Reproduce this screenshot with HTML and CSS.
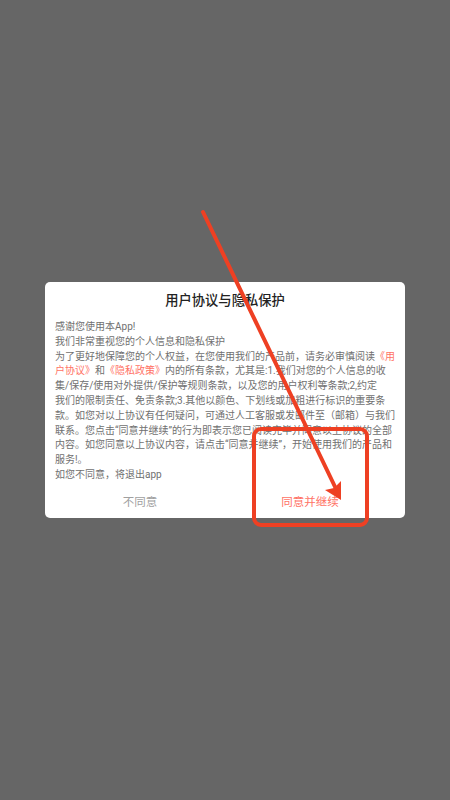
FILE: index.html
```html
<!DOCTYPE html>
<html lang="zh-CN">
<head>
    <meta charset="UTF-8">
    <title>用户协议与隐私保护</title>
    <link rel="stylesheet" href="styles.css">
</head>
<body>
<div class="mask">
    <div class="dialog">
        <h2 class="dialog-title">用户协议与隐私保护</h2>
        <div class="dialog-text">
            <p>感谢您使用本App!</p>
            <p>我们非常重视您的个人信息和隐私保护</p>
            <p>为了更好地保障您的个人权益，在您使用我们的产品前，请务必审慎阅读<span class="link">《用<br>户协议》</span>和<span class="link">《隐私政策》</span>内的所有条款，尤其是:1.我们对您的个人信息的收<br>集/保存/使用对外提供/保护等规则条款，以及您的用户权利等条款;2,约定<br>我们的限制责任、免责条款;3.其他以颜色、下划线或加粗进行标识的重要条<br>款。如您对以上协议有任何疑问，可通过人工客服或发邮件至（邮箱）与我们<br>联系。您点击“同意并继续”的行为即表示您已阅读完毕并同意以上协议的全部<br>内容。如您同意以上协议内容，请点击“同意并继续”，开始使用我们的产品和<br>服务!。</p>
            <p>如您不同意，将退出app</p>
        </div>
        <div class="dialog-btns">
            <div class="btn btn-no">不同意</div>
            <div class="btn btn-yes">同意并继续</div>
        </div>
    </div>
</div>
<!-- red annotation drawn over the screenshot -->
<svg class="mark" width="450" height="800" viewBox="0 0 450 800">
    <rect x="254" y="429" width="113" height="96" rx="7" fill="none" stroke="#ee4023" stroke-width="4"/>
    <path d="M203 212L338 493" fill="none" stroke="#ee4023" stroke-width="4" stroke-linecap="round"/>
    <path d="M341 500L325 490L334 488L341 481Z" fill="#ee4023"/>
</svg>
</body>
</html>
```

FILE: styles.css
```css
html, body {
    margin: 0;
    padding: 0;
}

body {
    position: relative;
    width: 450px;
    height: 800px;
    overflow: hidden;
    font-family: Roboto, "Noto Sans CJK SC", sans-serif;
}

.mask {
    height: 800px;
    background: #666;
    display: flex;
    justify-content: center;
    align-items: flex-start;
    padding-top: 282px;
    box-sizing: border-box;
}

.dialog {
    width: 360px;
    height: 236px;
    background: #fff;
    border-radius: 5px;
    padding: 0 10px;
    box-sizing: border-box;
}

.dialog-title {
    margin: 0;
    height: 38px;
    line-height: 38px;
    font-size: 13.3px;
    font-weight: 500;
    color: #222;
    text-align: center;
}

.dialog-text {
    font-size: 10px;
    line-height: 14.8px;
    color: #707070;
    white-space: nowrap;
}

.dialog-text p {
    margin: 0;
}

.link {
    color: #ff7265;
}

.dialog-btns {
    display: flex;
    margin-top: 2px;
}

.btn {
    flex: 1;
    height: 34px;
    line-height: 34px;
    text-align: center;
    font-size: 11.5px;
}

.btn-no {
    color: #a0a0a0;
}

.btn-yes {
    color: #ff7265;
}

.mark {
    position: absolute;
    left: 0;
    top: 0;
}
```
